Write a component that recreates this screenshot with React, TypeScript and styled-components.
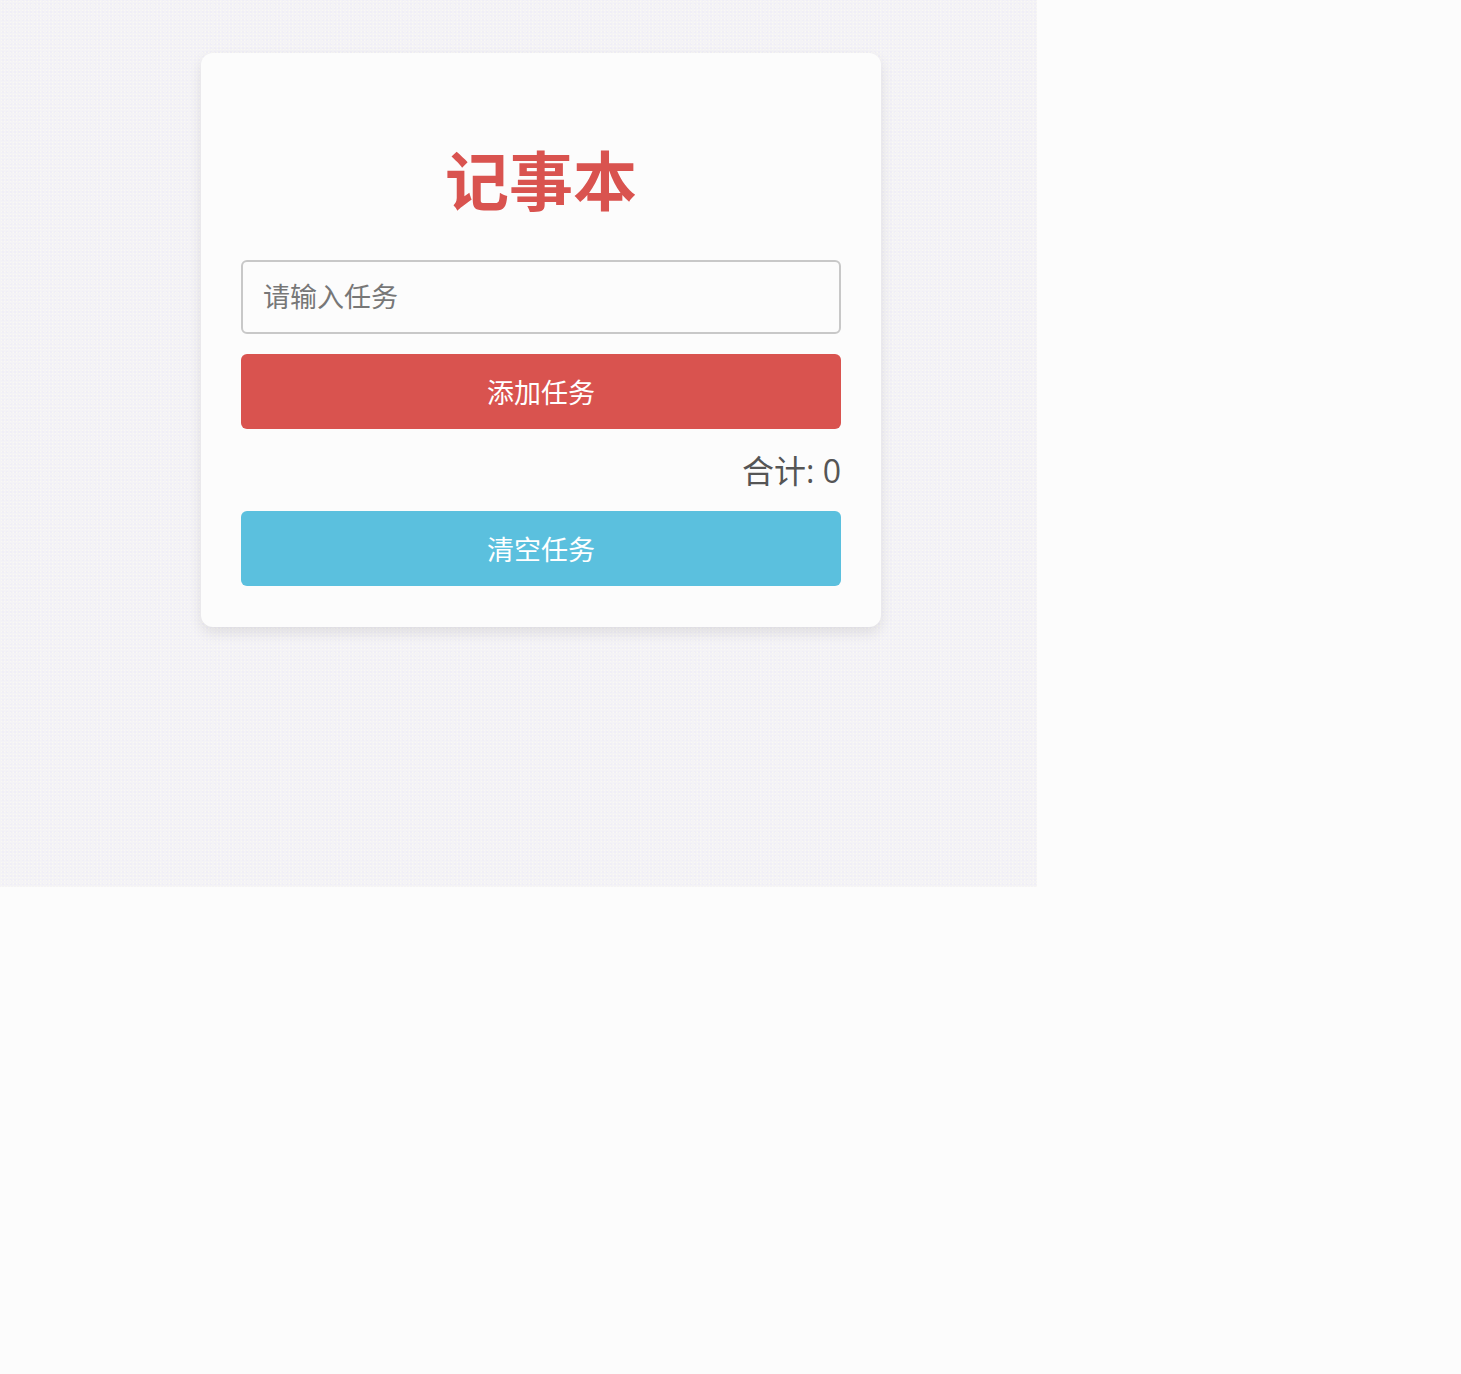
import React, { useState } from "react";
import styled, { createGlobalStyle } from "styled-components";

const Global = createGlobalStyle`
  html, body { margin: 0; padding: 0; background: #fcfcfc; }
  body { font-family: "Open Sans", "Noto Sans CJK SC", sans-serif; }
  * { box-sizing: border-box; }
`;

const Stage = styled.div`
  width: 1037px;
  height: 887px;
  background-color: #f4f3f6;
  background-image: radial-gradient(rgba(255, 255, 240, 0.5) 0.6px, transparent 0.8px),
    radial-gradient(rgba(230, 228, 245, 0.6) 0.6px, transparent 0.8px);
  background-size: 3px 3px, 4px 4px;
  background-position: 0 0, 1px 2px;
  padding: 53px 0 0 201px;
`;

const Card = styled.div`
  width: 680px;
  background: #fcfcfc;
  border-radius: 12px;
  box-shadow: 0 6px 14px rgba(0, 0, 0, 0.09);
  padding: 84px 40px 41px;
  display: flex;
  flex-direction: column;
`;

const Title = styled.h1`
  margin: 0 0 43px;
  text-align: center;
  font-family: "Noto Sans CJK SC", sans-serif;
  font-size: 64px;
  font-weight: 700;
  line-height: 80px;
  color: #d9534f;
`;

const Input = styled.input`
  width: 100%;
  height: 74px;
  border: 2px solid #c8c8c8;
  border-radius: 6px;
  background: #fcfcfc;
  padding: 0 20px 4px;
  font-family: "Noto Sans CJK SC", sans-serif;
  font-size: 27px;
  color: #333;
  outline: none;
  &::placeholder { color: #777; }
`;

const Button = styled.button<{ $bg: string }>`
  width: 100%;
  height: 75px;
  border: none;
  border-radius: 6px;
  background: ${(p) => p.$bg};
  color: #fff;
  font-family: "Noto Sans CJK SC", sans-serif;
  font-size: 27px;
  cursor: pointer;
`;

const AddButton = styled(Button)`
  margin-top: 20px;
`;

const Total = styled.div`
  text-align: right;
  margin: 18px 0 16px;
  font-family: "Open Sans", "Noto Sans CJK SC", sans-serif;
  font-size: 32px;
  line-height: 48px;
  color: #555;
`;

export default function App() {
  const [text, setText] = useState("");
  const [tasks, setTasks] = useState<string[]>([]);
  return (
    <>
      <Global />
      <Stage>
        <Card>
          <Title>记事本</Title>
          <Input
            placeholder="请输入任务"
            value={text}
            onChange={(e) => setText(e.target.value)}
          />
          <AddButton
            $bg="#d9534f"
            onClick={() => {
              if (text.trim()) {
                setTasks([...tasks, text.trim()]);
                setText("");
              }
            }}
          >
            添加任务
          </AddButton>
          <Total>合计: {tasks.length}</Total>
          <Button $bg="#5bc0de" onClick={() => setTasks([])}>
            清空任务
          </Button>
        </Card>
      </Stage>
    </>
  );
}
